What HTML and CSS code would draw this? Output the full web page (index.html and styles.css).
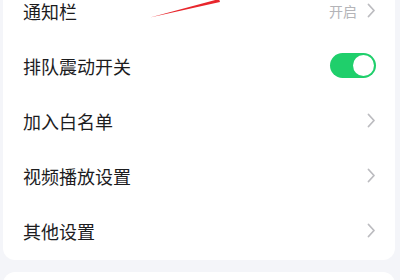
FILE: index.html
```html
<!DOCTYPE html>
<html>
<head>
	<meta charset="utf-8">
	<title>设置</title>
	<link rel="stylesheet" href="styles.css">
</head>
<body>
	<!--设置列表-->
	<div class="card">
		<div class="row">
			<span class="label">通知栏</span>
			<span class="extra">
				<span class="value">开启</span>
				<svg class="chevron" width="9" height="15" viewBox="0 0 9 15"><path d="M1.5 1.5 L7 7.5 L1.5 13.5" fill="none" stroke="#bcbcc0" stroke-width="1.8" stroke-linecap="round" stroke-linejoin="round"/></svg>
			</span>
		</div>
		<div class="row">
			<span class="label">排队震动开关</span>
			<span class="switch on"><span class="knob"></span></span>
		</div>
		<div class="row">
			<span class="label">加入白名单</span>
			<svg class="chevron" width="9" height="15" viewBox="0 0 9 15"><path d="M1.5 1.5 L7 7.5 L1.5 13.5" fill="none" stroke="#bcbcc0" stroke-width="1.8" stroke-linecap="round" stroke-linejoin="round"/></svg>
		</div>
		<div class="row">
			<span class="label">视频播放设置</span>
			<svg class="chevron" width="9" height="15" viewBox="0 0 9 15"><path d="M1.5 1.5 L7 7.5 L1.5 13.5" fill="none" stroke="#bcbcc0" stroke-width="1.8" stroke-linecap="round" stroke-linejoin="round"/></svg>
		</div>
		<div class="row">
			<span class="label">其他设置</span>
			<svg class="chevron" width="9" height="15" viewBox="0 0 9 15"><path d="M1.5 1.5 L7 7.5 L1.5 13.5" fill="none" stroke="#bcbcc0" stroke-width="1.8" stroke-linecap="round" stroke-linejoin="round"/></svg>
		</div>
	</div>
	<div class="card next"></div>
	<!--标注箭头-->
	<svg class="mark" width="400" height="30" viewBox="0 0 400 30"><path d="M150 17.5 L219 -1 L220 2 Z" fill="#e8262c"/></svg>
</body>
</html>
```
FILE: styles.css
```css
* {
	margin: 0;
	padding: 0;
}

html,
body {
	height: 280px;
	overflow: hidden;
}

body {
	background-color: #f4f5f9;
	padding: 0 5px 0 3px;
	font-family: "Noto Sans CJK SC", "Noto Sans", sans-serif;
}

.card {
	background-color: #fff;
	border-radius: 12px;
	margin-top: -17px;
	padding: 0 20px 2px 20px;
}

.card.next {
	margin-top: 12px;
	height: 40px;
}

.row {
	height: 55px;
	display: flex;
	align-items: center;
	justify-content: space-between;
}

.label {
	font-size: 18px;
	color: #1c1c1e;
}

.extra {
	display: flex;
	align-items: center;
	gap: 10px;
}

.value {
	font-size: 14px;
	color: #b4b4b8;
}

.chevron {
	display: block;
	margin-right: -1px;
}

.switch {
	width: 46px;
	height: 25px;
	border-radius: 13px;
	background-color: #1fcf6b;
	display: flex;
	align-items: center;
	justify-content: flex-end;
	padding: 0 2px;
	box-sizing: border-box;
	margin-right: -1px;
}

.knob {
	width: 21px;
	height: 21px;
	border-radius: 50%;
	background-color: #fff;
}

.mark {
	position: absolute;
	left: 0;
	top: 0;
}
```
